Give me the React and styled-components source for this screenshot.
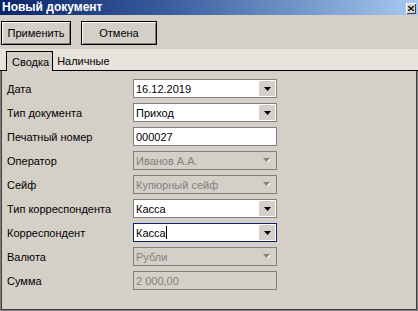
import React from 'react';
import styled, { createGlobalStyle } from 'styled-components';

const GlobalStyle = createGlobalStyle`
    html, body {
        margin: 0;
        padding: 0;
        background: #d4d0c8;
    }
    * {
        box-sizing: border-box;
    }
`;

const Window = styled.div`
    width: 418px;
    height: 311px;
    display: flex;
    flex-direction: column;
    background: #d4d0c8;
    font-family: "Liberation Sans", Arial, sans-serif;
    font-size: 11px;
    color: #000;
    overflow: hidden;
`;

const TitleBar = styled.div`
    height: 15px;
    display: flex;
    align-items: center;
    justify-content: space-between;
    padding: 0 2px 0 2px;
    background: linear-gradient(90deg, #0a246a 0%, #3a5d9e 40%, #a6caf0 100%);
`;

const TitleText = styled.span`
    color: #fff;
    font-weight: bold;
    font-size: 12px;
    line-height: 15px;
`;

const CloseButton = styled.div`
    width: 10px;
    height: 11px;
    margin-top: 1px;
    display: flex;
    align-items: center;
    justify-content: center;
    background: #d4d0c8;
    box-shadow: inset 1px 1px #fff, inset -1px -1px #404040;
`;

const Toolbar = styled.div`
    height: 34px;
    display: flex;
    align-items: flex-start;
    gap: 10px;
    padding: 6px 0 0 1px;
`;

const Button = styled.div`
    width: ${p => p.$w}px;
    height: 24px;
    display: flex;
    align-items: center;
    justify-content: center;
    border: 1px solid #000;
    box-shadow: inset 1px 1px #fff, inset -1px -1px #808080;
    background: #d4d0c8;
    font-size: 11px;
`;

const TabStrip = styled.div`
    height: 22px;
    display: flex;
    align-items: flex-end;
    padding-left: 6px;
    background: #e7e4de;
    border-bottom: 1px solid #000;
`;

const Tab = styled.div`
    height: ${p => (p.$active ? 20 : 19)}px;
    margin-bottom: ${p => (p.$active ? -1 : 0)}px;
    display: flex;
    align-items: center;
    padding: ${p => (p.$active ? '0 3px 0 5px' : '0 4px 0 4px')};
    background: ${p => (p.$active ? '#d4d0c8' : 'transparent')};
    border: ${p => (p.$active ? '1px solid #000' : 'none')};
    border-bottom: none;
`;

const TabPage = styled.div`
    flex: 1;
    border-left: 1px solid #808080;
    border-right: 1px solid #808080;
    border-bottom: 1px solid #808080;
    box-shadow: inset 1px 0 #404040, inset -1px 0 #404040, inset 0 -1px #404040;
    padding: 8px 0 0 6px;
`;

const Form = styled.div`
    display: grid;
    grid-template-columns: 126px 144px;
    grid-auto-rows: 19px;
    row-gap: 5px;
`;

const Label = styled.div`
    display: flex;
    align-items: center;
    white-space: nowrap;
`;

const Field = styled.div`
    height: 19px;
    display: flex;
    align-items: stretch;
    padding: 1px;
    border: 1px solid ${p => (p.$focused ? '#0a246a' : '#808080')};
    background: ${p => (p.$disabled ? '#d4d0c8' : '#fff')};
    color: ${p => (p.$disabled ? '#808080' : '#000')};
`;

const Value = styled.div`
    flex: 1;
    display: flex;
    align-items: center;
    padding-left: 1px;
    white-space: nowrap;
    overflow: hidden;
`;

const Caret = styled.span`
    display: inline-block;
    width: 1px;
    height: 13px;
    background: #000;
`;

const DropButton = styled.div`
    width: 16px;
    display: flex;
    align-items: center;
    justify-content: center;
    background: #d4d0c8;
`;

const rows = [
    { label: 'Дата', value: '16.12.2019', combo: true },
    { label: 'Тип документа', value: 'Приход', combo: true },
    { label: 'Печатный номер', value: '000027' },
    { label: 'Оператор', value: 'Иванов А.А.', combo: true, disabled: true },
    { label: 'Сейф', value: 'Купюрный сейф', combo: true, disabled: true },
    { label: 'Тип корреспондента', value: 'Касса', combo: true },
    { label: 'Корреспондент', value: 'Касса', combo: true, focused: true },
    { label: 'Валюта', value: 'Рубли', combo: true, disabled: true },
    { label: 'Сумма', value: '2 000,00', disabled: true },
];

function Arrow({ disabled }) {
    if (disabled) {
        return (
            <svg width="9" height="6" viewBox="0 0 9 6">
                <polygon points="1,1 8,1 4.5,5" fill="#fff" />
                <polygon points="0,0 7,0 3.5,4" fill="#808080" />
            </svg>
        );
    }
    return (
        <svg width="7" height="4" viewBox="0 0 7 4">
            <polygon points="0,0 7,0 3.5,4" fill="#000" />
        </svg>
    );
}

function Row({ row }) {
    return (
        <>
            <Label>{row.label}</Label>
            <Field $disabled={row.disabled} $focused={row.focused}>
                <Value>
                    {row.value}
                    {row.focused && <Caret />}
                </Value>
                {row.combo && (
                    <DropButton>
                        <Arrow disabled={row.disabled} />
                    </DropButton>
                )}
            </Field>
        </>
    );
}

export default function App() {
    return (
        <>
            <GlobalStyle />
            <Window>
                <TitleBar>
                    <TitleText>Новый документ</TitleText>
                    <CloseButton>
                        <svg width="6" height="5" viewBox="0 0 6 5">
                            <path d="M0 0 L6 5 M6 0 L0 5" stroke="#000" strokeWidth="1.2" />
                        </svg>
                    </CloseButton>
                </TitleBar>
                <Toolbar>
                    <Button $w={70}>Применить</Button>
                    <Button $w={76}>Отмена</Button>
                </Toolbar>
                <TabStrip>
                    <Tab $active>Сводка</Tab>
                    <Tab>Наличные</Tab>
                </TabStrip>
                <TabPage>
                    <Form>
                        {rows.map(r => <Row key={r.label} row={r} />)}
                    </Form>
                </TabPage>
            </Window>
        </>
    );
}
